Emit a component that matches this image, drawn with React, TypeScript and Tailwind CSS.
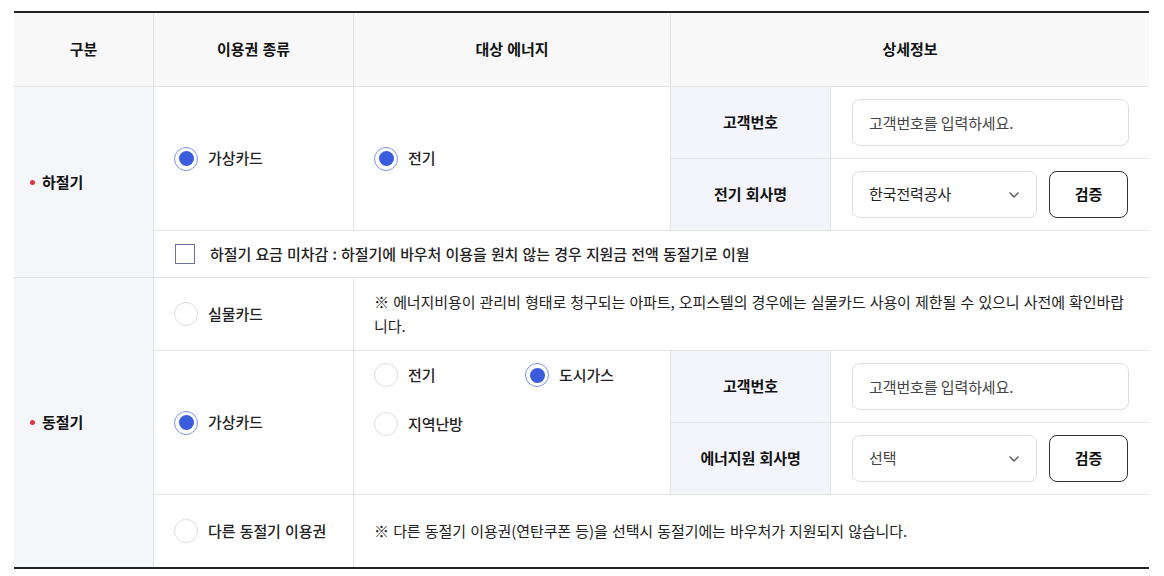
import { ChevronDown } from "lucide-react";

const Radio = ({ checked, label }: { checked?: boolean; label: string }) => (
  <label className="flex items-center gap-[10px] font-medium text-[#222]">
    <span
      className={
        checked
          ? "flex h-6 w-6 shrink-0 items-center justify-center rounded-full border-[1.5px] border-[#7f92e4] bg-white"
          : "flex h-6 w-6 shrink-0 items-center justify-center rounded-full border-[1.5px] border-[#dcdcdc] bg-white"
      }
    >
      {checked && <span className="h-[15px] w-[15px] rounded-full bg-[#3b5ddd]" />}
    </span>
    {label}
  </label>
);

const HeadCell = ({ children, className = "" }: { children: React.ReactNode; className?: string }) => (
  <div className={`flex items-center justify-center bg-[#f8f8f8] font-bold text-[#111] ${className}`}>
    {children}
  </div>
);

const Label = ({ children, className = "" }: { children: React.ReactNode; className?: string }) => (
  <div className={`flex items-center justify-center bg-[#f3f5fa] font-bold text-[#111] ${className}`}>
    {children}
  </div>
);

const Season = ({ name, className = "" }: { name: string; className?: string }) => (
  <div className={`flex items-center bg-[#f5f6fa] pl-[16px] font-bold text-[#111] ${className}`}>
    <span className="mr-[7px] h-[5px] w-[5px] rounded-full bg-[#e0323c]" />
    {name}
  </div>
);

const CustomerInput = ({ className = "" }: { className?: string }) => (
  <div className={`flex items-center bg-white pl-[21px] pr-5 ${className}`}>
    <input
      className="h-[47px] w-full rounded-lg border border-[#dedede] px-[16px] text-[15px] text-[#222] outline-none placeholder:text-[#444]"
      placeholder="고객번호를 입력하세요."
    />
  </div>
);

const CompanySelect = ({ value, className = "" }: { value: string; className?: string }) => (
  <div className={`flex items-center gap-3 bg-white pl-[21px] pr-5 ${className}`}>
    <div className="flex h-[47px] w-[185px] items-center justify-between rounded-lg border border-[#dedede] pl-[16px] pr-[14px] text-[#222]">
      <span className={value === "선택" ? "text-[#444]" : ""}>{value}</span>
      <ChevronDown size={16} strokeWidth={2} className="text-[#555]" />
    </div>
    <button className="h-[47px] w-[79px] rounded-lg border border-[#333] bg-white font-bold text-[#111]">
      검증
    </button>
  </div>
);

export default function App() {
  return (
    <div className="min-h-screen bg-white pl-[14px] pt-[11px] font-['Noto_Sans_CJK_KR','Noto_Sans',sans-serif] text-[15px] tracking-[-0.1px] [word-spacing:1px]">
      <div className="w-[1135px] border-y-2 border-[#222]">
        <div className="grid grid-cols-[139px_199px_316px_159px_318px] grid-rows-[73px_71px_71px_46px_72px_71px_71px_72px] gap-px bg-[#e3e3e3]">
          <HeadCell className="col-start-1 row-start-1">구분</HeadCell>
          <HeadCell className="col-start-2 row-start-1">이용권 종류</HeadCell>
          <HeadCell className="col-start-3 row-start-1">대상 에너지</HeadCell>
          <HeadCell className="col-start-4 col-span-2 row-start-1">상세정보</HeadCell>

          {/* 하절기 */}
          <Season name="하절기" className="col-start-1 row-start-2 row-span-3" />
          <div className="col-start-2 row-start-2 row-span-2 flex items-center bg-white pl-5">
            <Radio checked label="가상카드" />
          </div>
          <div className="col-start-3 row-start-2 row-span-2 flex items-center bg-white pl-5">
            <Radio checked label="전기" />
          </div>
          <Label className="col-start-4 row-start-2">고객번호</Label>
          <CustomerInput className="col-start-5 row-start-2" />
          <Label className="col-start-4 row-start-3">전기 회사명</Label>
          <CompanySelect value="한국전력공사" className="col-start-5 row-start-3" />
          <div className="col-start-2 col-span-4 row-start-4 flex items-center gap-[15px] bg-white pl-[21px] font-medium text-[#222]">
            <span className="h-5 w-5 shrink-0 border-[1.5px] border-[#6b719e] bg-white" />
            하절기 요금 미차감 : 하절기에 바우처 이용을 원치 않는 경우 지원금 전액 동절기로 이월
          </div>

          {/* 동절기 */}
          <Season name="동절기" className="col-start-1 row-start-5 row-span-4" />
          <div className="col-start-2 row-start-5 flex items-center bg-white pl-5">
            <Radio label="실물카드" />
          </div>
          <div className="col-start-3 col-span-3 row-start-5 flex items-center bg-white px-5 leading-[24px] text-[#222] break-all">
            <p>
              ※ 에너지비용이 관리비 형태로 청구되는 아파트, 오피스텔의 경우에는 실물카드 사용이 제한될 수 있으니 사전에 확인바랍니다.
            </p>
          </div>
          <div className="col-start-2 row-start-6 row-span-2 flex items-center bg-white pl-5">
            <Radio checked label="가상카드" />
          </div>
          <div className="col-start-3 row-start-6 row-span-2 bg-white pl-5 pt-3">
            <div className="grid grid-cols-[151px_151px] gap-y-[25px]">
              <Radio label="전기" />
              <Radio checked label="도시가스" />
              <Radio label="지역난방" />
            </div>
          </div>
          <Label className="col-start-4 row-start-6">고객번호</Label>
          <CustomerInput className="col-start-5 row-start-6" />
          <Label className="col-start-4 row-start-7">에너지원 회사명</Label>
          <CompanySelect value="선택" className="col-start-5 row-start-7" />
          <div className="col-start-2 row-start-8 flex items-center bg-white pl-5">
            <Radio label="다른 동절기 이용권" />
          </div>
          <div className="col-start-3 col-span-3 row-start-8 flex items-center bg-white px-5 text-[#222]">
            ※ 다른 동절기 이용권(연탄쿠폰 등)을 선택시 동절기에는 바우처가 지원되지 않습니다.
          </div>
        </div>
      </div>
    </div>
  );
}
